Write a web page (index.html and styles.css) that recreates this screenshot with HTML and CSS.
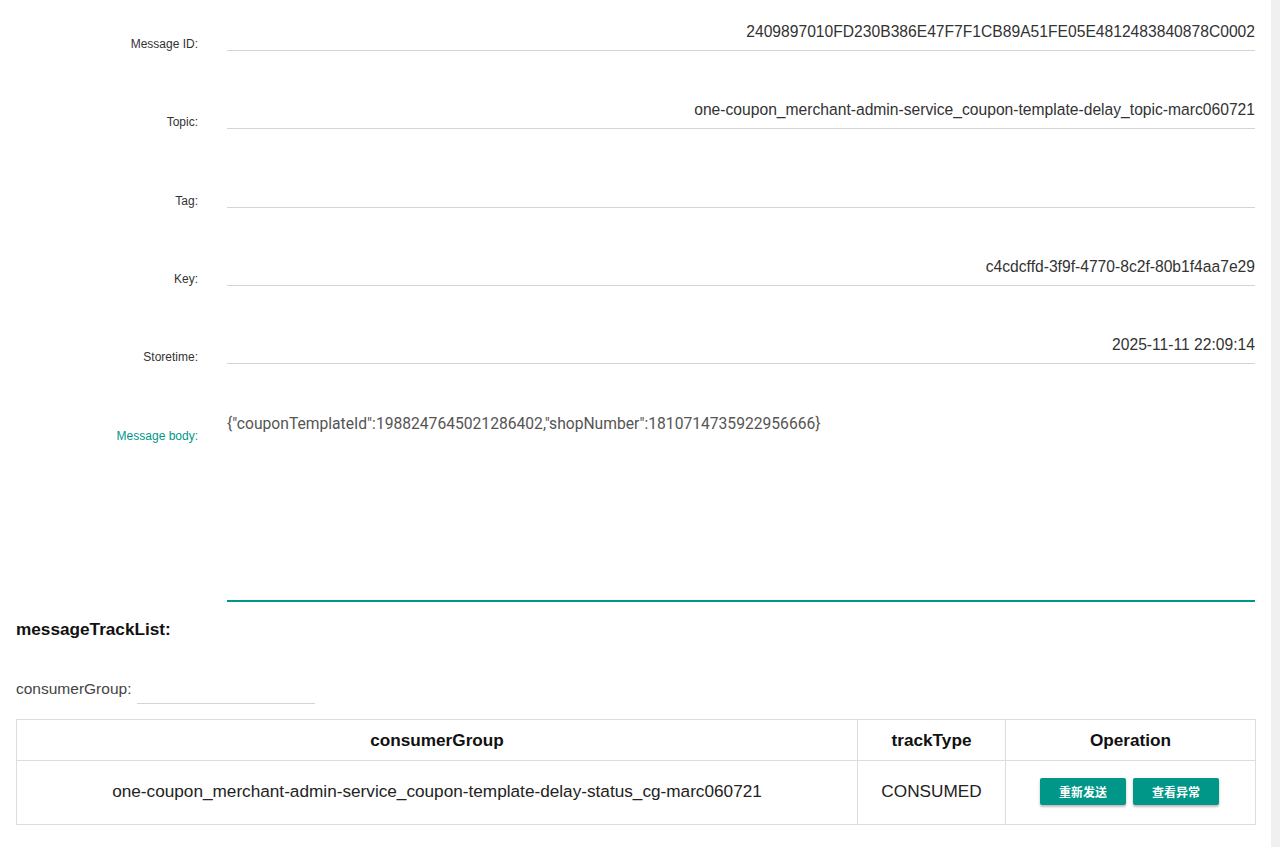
FILE: index.html
```html
<!DOCTYPE html>
<html lang="en">
<head>
<meta charset="utf-8">
<title>Message Detail</title>
<link rel="stylesheet" href="styles.css">
</head>
<body>
<div class="page">
  <main class="content">
    <section class="form">
      <div class="row">
        <label class="label">Message ID:</label>
        <div class="value">2409897010FD230B386E47F7F1CB89A51FE05E4812483840878C0002</div>
      </div>
      <div class="row">
        <label class="label">Topic:</label>
        <div class="value">one-coupon_merchant-admin-service_coupon-template-delay_topic-marc060721</div>
      </div>
      <div class="row">
        <label class="label">Tag:</label>
        <div class="value"></div>
      </div>
      <div class="row">
        <label class="label">Key:</label>
        <div class="value">c4cdcffd-3f9f-4770-8c2f-80b1f4aa7e29</div>
      </div>
      <div class="row">
        <label class="label">Storetime:</label>
        <div class="value">2025-11-11 22:09:14</div>
      </div>
      <div class="row row-body">
        <label class="label label-active">Message body:</label>
        <div class="textarea">{"couponTemplateId":1988247645021286402,"shopNumber":1810714735922956666}</div>
      </div>
    </section>

    <h3 class="track-title">messageTrackList:</h3>

    <div class="filter">
      <span class="filter-label">consumerGroup:</span>
      <span class="filter-input"></span>
    </div>

    <table class="track-table">
      <colgroup>
        <col class="c1">
        <col class="c2">
        <col class="c3">
      </colgroup>
      <thead>
        <tr>
          <th>consumerGroup</th>
          <th>trackType</th>
          <th>Operation</th>
        </tr>
      </thead>
      <tbody>
        <tr>
          <td>one-coupon_merchant-admin-service_coupon-template-delay-status_cg-marc060721</td>
          <td>CONSUMED</td>
          <td>
            <div class="ops">
              <button class="btn">重新发送</button>
              <button class="btn">查看异常</button>
            </div>
          </td>
        </tr>
      </tbody>
    </table>
  </main>
  <div class="scrolltrack"></div>
</div>
</body>
</html>
```
FILE: styles.css
```css
html, body {
  margin: 0;
  padding: 0;
  background: #fff;
}

body {
  font-family: "Liberation Sans", Arial, sans-serif;
  color: #333;
}

.page {
  display: flex;
  height: 100vh;
  overflow: hidden;
}

.content {
  flex: 1;
  padding: 22px 16px 0 16px;
  min-width: 0;
}

.scrolltrack {
  width: 9px;
  flex: none;
  background: #f0f0f0;
}

.form {
  display: flex;
  flex-direction: column;
  gap: 49.25px;
}

.row {
  display: flex;
  align-items: flex-end;
}

.label {
  width: 182px;
  margin-right: 29px;
  flex: none;
  text-align: right;
  font-size: 12px;
  line-height: 14px;
  color: #333;
}

.value {
  flex: 1;
  text-align: right;
  font-size: 15.65px;
  line-height: 18px;
  height: 18px;
  padding-top: 1px;
  padding-bottom: 9px;
  border-bottom: 1px solid #d4d4d4;
  color: #333;
  white-space: nowrap;
}

.row-body {
  align-items: flex-start;
}

.row-body .label {
  padding-top: 16px;
}

.label-active {
  color: #009688;
}

.textarea {
  flex: 1;
  height: 189px;
  font-family: Roboto, "Liberation Sans", sans-serif;
  font-size: 15.65px;
  line-height: 18px;
  color: #555;
  border-bottom: 2px solid #009688;
  padding-top: 2px;
  box-sizing: border-box;
}

.track-title {
  margin: 17px 0 0 0;
  font-size: 17.2px;
  line-height: 20px;
  font-weight: bold;
  color: #111;
}

.filter {
  display: flex;
  align-items: flex-end;
  margin-top: 40px;
  height: 25px;
}

.filter-label {
  font-size: 15.5px;
  line-height: 18px;
  color: #444;
  padding-bottom: 6px;
}

.filter-input {
  display: block;
  width: 178px;
  margin-left: 6px;
  height: 24px;
  border-bottom: 1px solid #d4d4d4;
}

.track-table {
  margin-top: 15px;
  width: 1239px;
  border-collapse: collapse;
  table-layout: fixed;
}

.track-table col.c1 { width: 841px; }
.track-table col.c2 { width: 148px; }
.track-table col.c3 { width: 250px; }

.track-table th,
.track-table td {
  border: 1px solid #dddddd;
  text-align: center;
  font-size: 17.2px;
  color: #222;
  padding: 0;
}

.track-table th {
  height: 40px;
  font-weight: bold;
  color: #111;
}

.track-table td {
  height: 61px;
  padding-bottom: 2px;
}

.ops {
  display: flex;
  justify-content: center;
  gap: 7px;
  padding-right: 2px;
}

.btn {
  width: 86px;
  height: 27px;
  border: none;
  border-radius: 2px;
  background: #009688;
  color: #fff;
  font-family: "Noto Sans CJK SC", sans-serif;
  font-size: 12px;
  font-weight: bold;
  padding: 0;
  box-shadow: 0 2px 2px rgba(0, 0, 0, 0.2), 0 1px 4px rgba(0, 0, 0, 0.1);
}
```
